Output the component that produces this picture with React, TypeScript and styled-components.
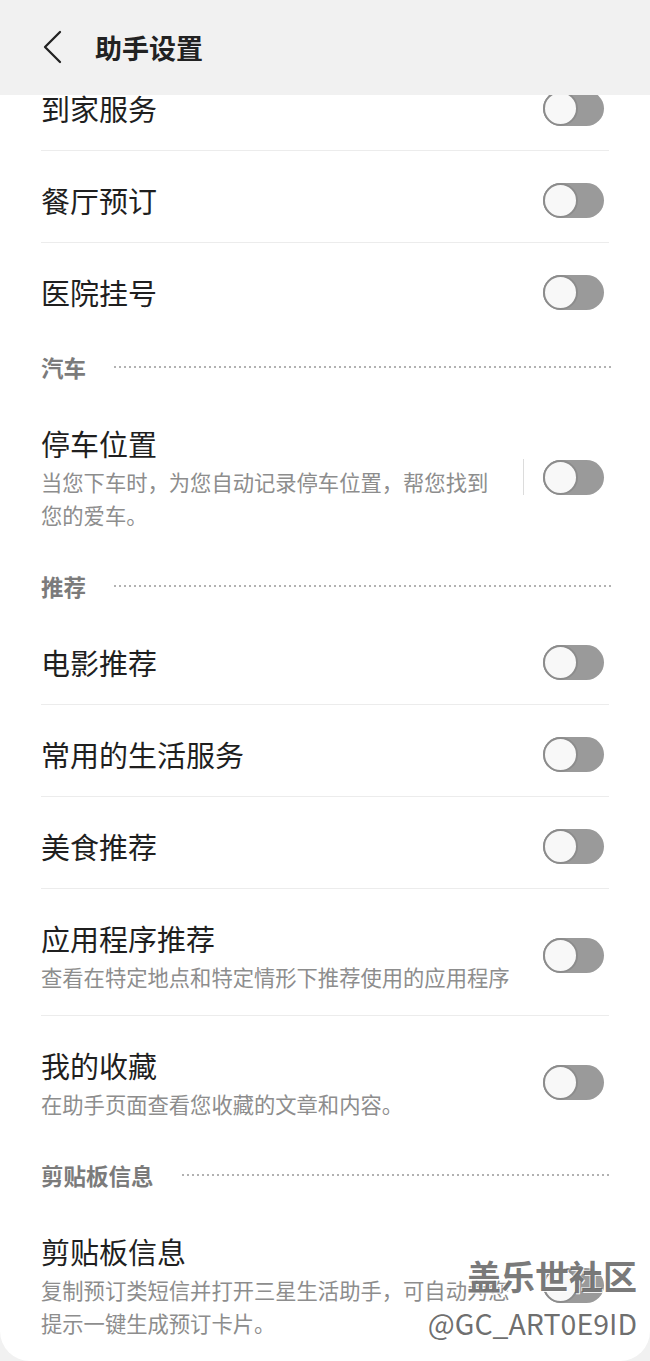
import React from "react";
import styled, { createGlobalStyle } from "styled-components";

const GlobalStyle = createGlobalStyle`
  html, body { margin: 0; padding: 0; background: #f1f1f1; }
  body { font-family: "Noto Sans CJK SC", "Noto Sans", sans-serif; }
  * { box-sizing: border-box; }
`;

const Page = styled.div`
  width: 650px;
  height: 1361px;
  display: flex;
  flex-direction: column;
  background: #f1f1f1;
  overflow: hidden;
`;

const Header = styled.header`
  flex: none;
  height: 95px;
  display: flex;
  align-items: center;
  gap: 33px;
  padding-left: 42px;
  background: #f1f1f1;
`;

const BackButton = styled.button`
  border: 0;
  padding: 0;
  background: transparent;
  display: flex;
  width: 20px;
  height: 34px;
  margin-top: -1px;
`;

const Title = styled.h1`
  margin: 0;
  font-size: 27px;
  font-weight: 700;
  color: #222;
  line-height: 40px;
`;

const Card = styled.main`
  position: relative;
  flex: 1;
  background: #fff;
  border-radius: 0 0 30px 30px;
  overflow: hidden;
`;

const ScrollContent = styled.div`
  margin-top: -36px;
  padding: 0 41px;
`;

const Group = styled.section``;

const SectionHeader = styled.div`
  display: flex;
  align-items: center;
  gap: 28px;
  padding: 20px 0 15px;
`;

const SectionLabel = styled.span`
  font-size: 22.5px;
  line-height: 24px;
  font-weight: 700;
  color: #7b7b7b;
`;

const Dots = styled.span`
  flex: 1;
  height: 2px;
  margin-right: -3px;
  background-image: linear-gradient(to right, #b2b2b2 0 2px, transparent 2px);
  background-size: 5px 2px;
  background-repeat: repeat-x;
`;

const Row = styled.div`
  display: flex;
  align-items: center;
  padding: 29px 0 22px;
  border-bottom: 1px solid #ececec;
  &:last-child {
    border-bottom-color: transparent;
  }
`;

const TextCol = styled.div`
  flex: 1;
  min-width: 0;
`;

const RowTitle = styled.div`
  font-size: 29px;
  line-height: 40px;
  color: #1f1f1f;
`;

const RowSub = styled.div`
  margin-top: 2px;
  font-size: 21.3px;
  line-height: 33px;
  color: #8d8d8d;
`;

const Separator = styled.span`
  flex: none;
  width: 1px;
  height: 36px;
  margin: 0 19px 0 24px;
  background: #dcdcdc;
`;

const Toggle = styled.span<{ $gap: boolean }>`
  flex: none;
  position: relative;
  width: 61px;
  height: 35px;
  margin-left: ${(p) => (p.$gap ? "0" : "24px")};
  margin-right: 5px;
  border-radius: 18px;
  background: #9a9a9a;
`;

const Knob = styled.span`
  position: absolute;
  left: 0;
  top: 0;
  width: 35px;
  height: 35px;
  border-radius: 50%;
  background: #f8f8f8;
  border: 2px solid #8c8c8c;
`;

const Watermark = styled.div`
  position: absolute;
  right: 13px;
  bottom: 18px;
  text-align: right;
  pointer-events: none;
`;

const WatermarkBrand = styled.div`
  font-size: 34px;
  line-height: 54px;
  font-weight: 700;
  color: rgba(70, 70, 70, 0.72);
  text-shadow: 1px 1px 0 rgba(255, 255, 255, 0.9), -1px -1px 0 rgba(255, 255, 255, 0.6);
`;

const WatermarkId = styled.div`
  font-size: 28.5px;
  line-height: 40px;
  color: rgba(85, 85, 85, 0.85);
  text-shadow: 1px 1px 0 rgba(255, 255, 255, 0.9), -1px -1px 0 rgba(255, 255, 255, 0.8);
`;

type Item = { title: string; sub?: string; separator?: boolean };
type Section = { label?: string; items: Item[] };

const sections: Section[] = [
  {
    items: [{ title: "到家服务" }, { title: "餐厅预订" }, { title: "医院挂号" }],
  },
  {
    label: "汽车",
    items: [
      {
        title: "停车位置",
        sub: "当您下车时，为您自动记录停车位置，帮您找到您的爱车。",
        separator: true,
      },
    ],
  },
  {
    label: "推荐",
    items: [
      { title: "电影推荐" },
      { title: "常用的生活服务" },
      { title: "美食推荐" },
      { title: "应用程序推荐", sub: "查看在特定地点和特定情形下推荐使用的应用程序" },
      { title: "我的收藏", sub: "在助手页面查看您收藏的文章和内容。" },
    ],
  },
  {
    label: "剪贴板信息",
    items: [
      {
        title: "剪贴板信息",
        sub: "复制预订类短信并打开三星生活助手，可自动为您提示一键生成预订卡片。",
      },
    ],
  },
];

const Chevron = () => (
  <svg width="20" height="34" viewBox="0 0 20 34" fill="none">
    <polyline
      points="18,2 3,17 18,32"
      stroke="#222"
      strokeWidth="2.3"
      strokeLinecap="round"
      strokeLinejoin="round"
    />
  </svg>
);

export default function App() {
  return (
    <>
      <GlobalStyle />
      <Page>
        <Header>
          <BackButton aria-label="返回">
            <Chevron />
          </BackButton>
          <Title>助手设置</Title>
        </Header>
        <Card>
          <ScrollContent>
            {sections.map((s, i) => (
              <Group key={i}>
                {s.label && (
                  <SectionHeader>
                    <SectionLabel>{s.label}</SectionLabel>
                    <Dots />
                  </SectionHeader>
                )}
                {s.items.map((it) => (
                  <Row key={it.title}>
                    <TextCol>
                      <RowTitle>{it.title}</RowTitle>
                      {it.sub && <RowSub>{it.sub}</RowSub>}
                    </TextCol>
                    {it.separator && <Separator />}
                    <Toggle $gap={!!it.separator}>
                      <Knob />
                    </Toggle>
                  </Row>
                ))}
              </Group>
            ))}
          </ScrollContent>
          <Watermark>
            <WatermarkBrand>盖乐世社区</WatermarkBrand>
            <WatermarkId>@GC_ART0E9ID</WatermarkId>
          </Watermark>
        </Card>
      </Page>
    </>
  );
}
